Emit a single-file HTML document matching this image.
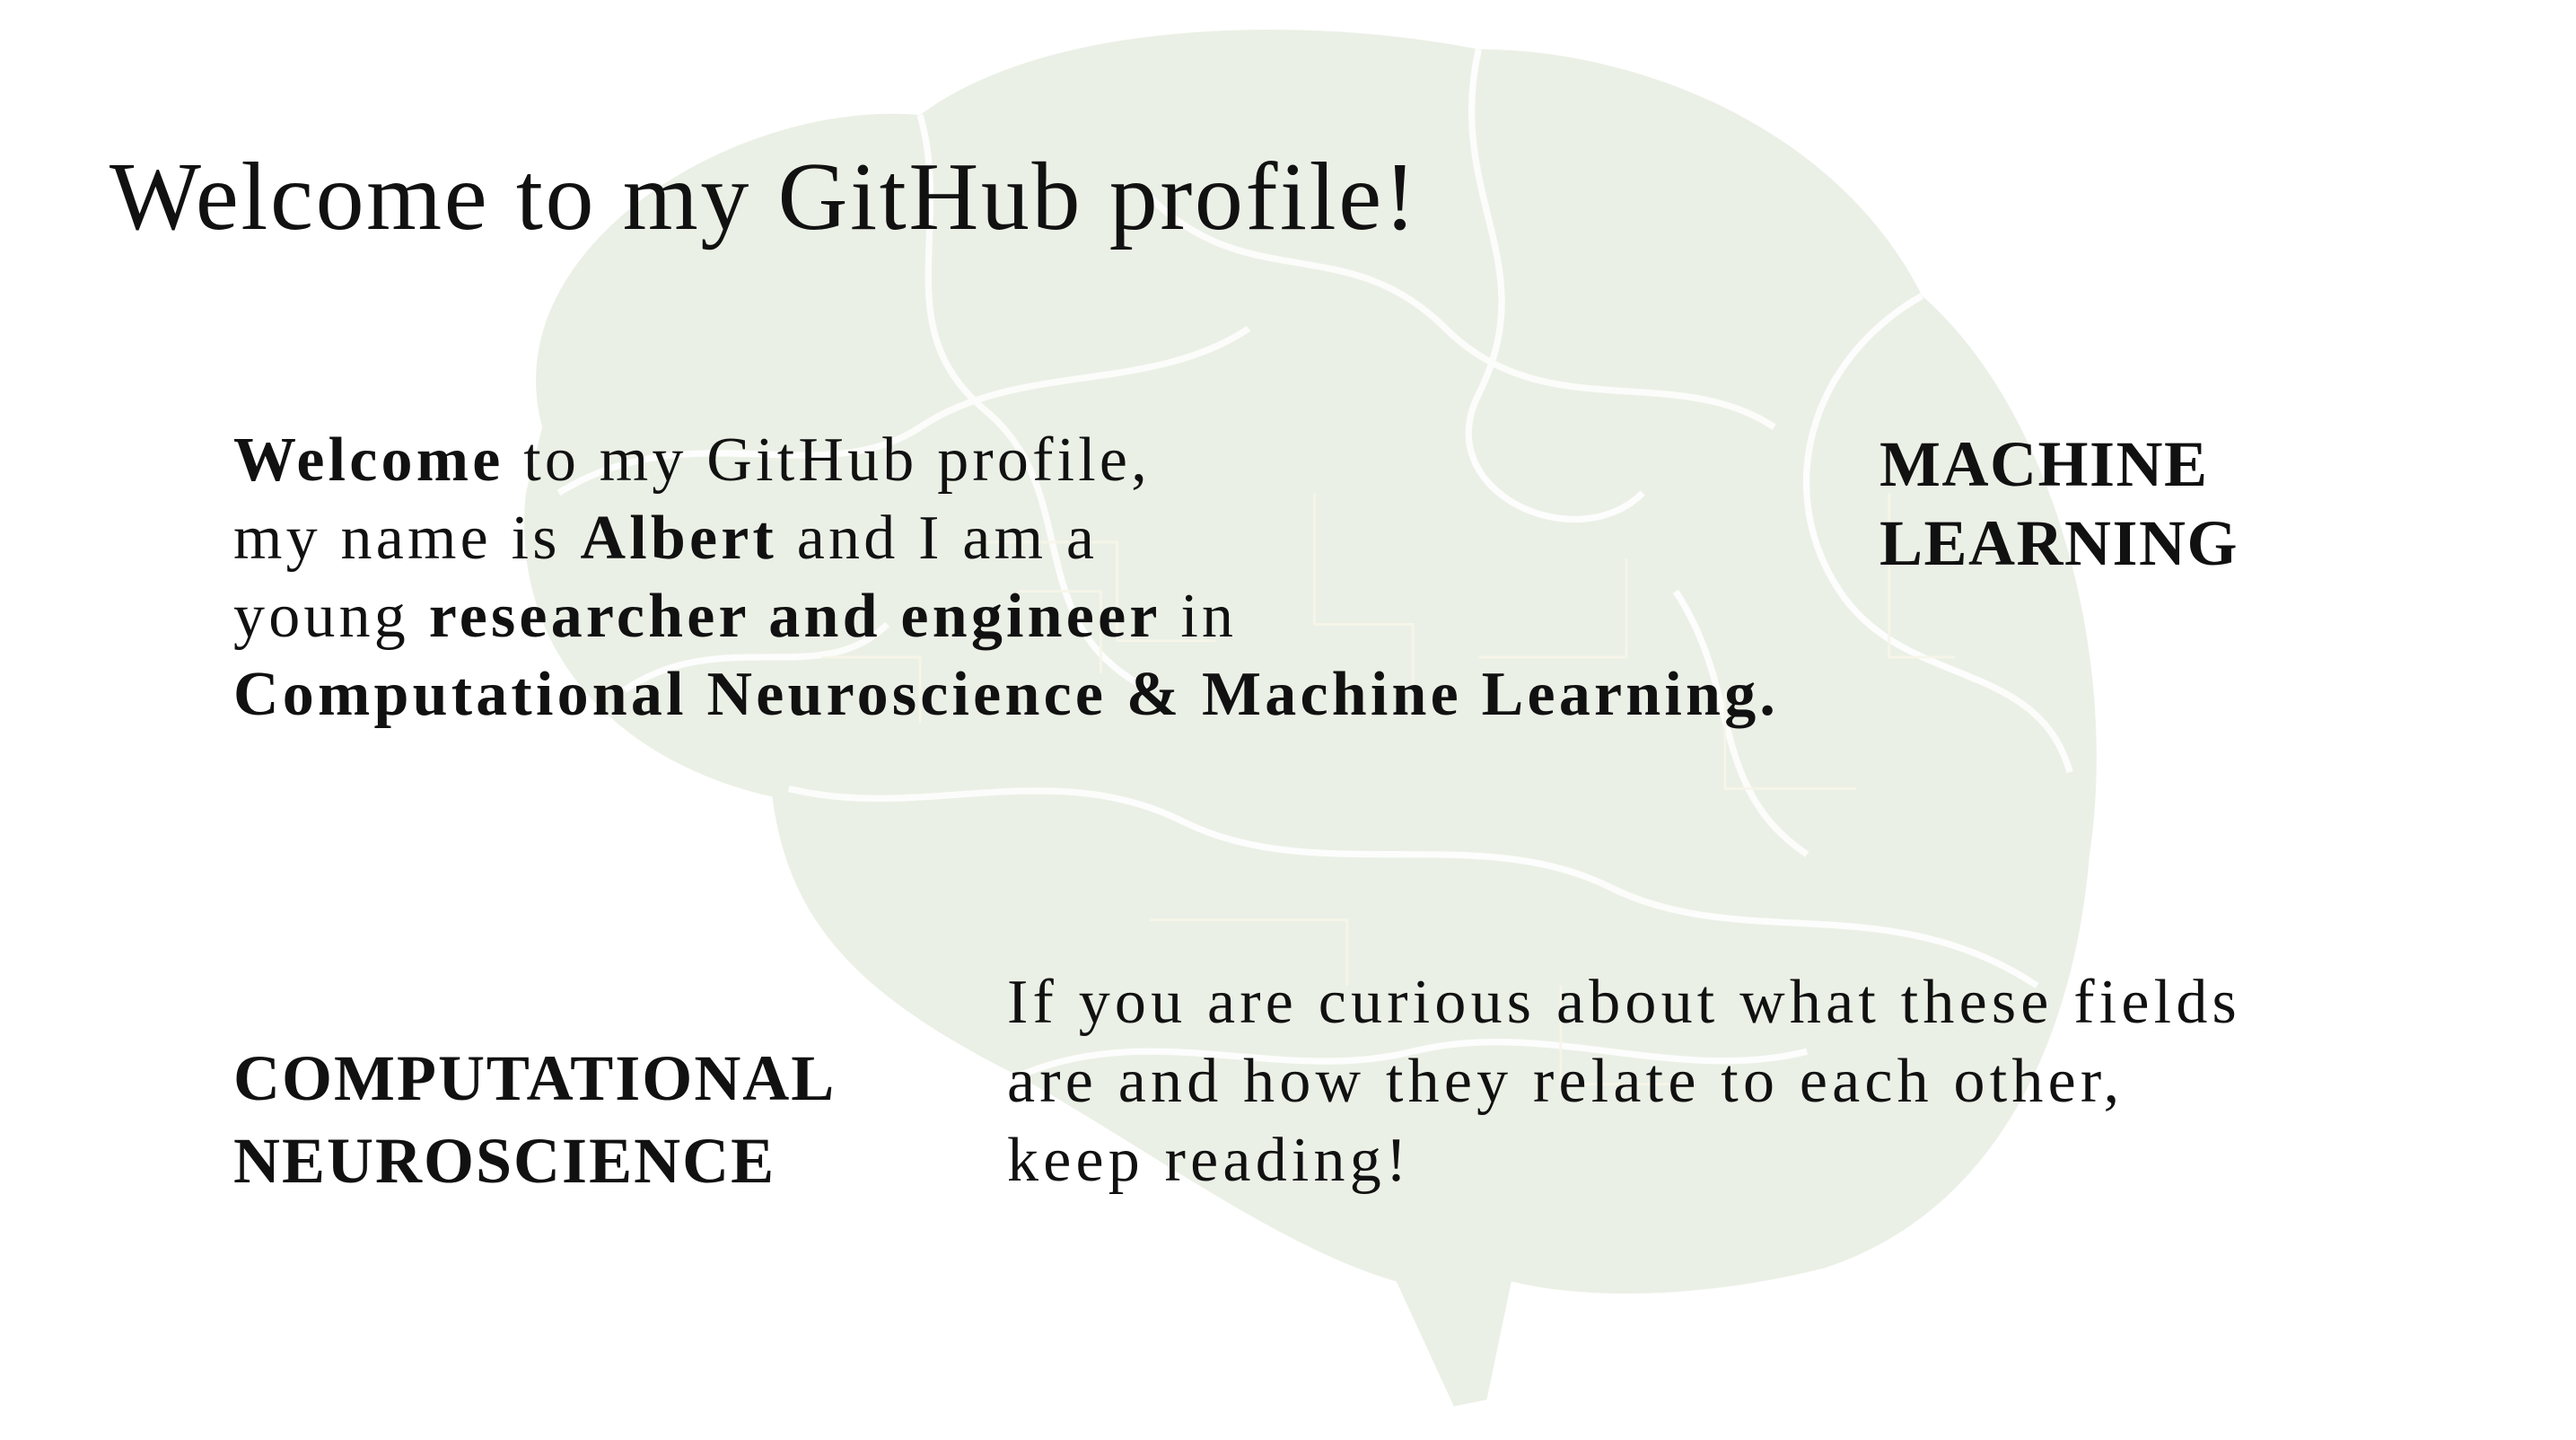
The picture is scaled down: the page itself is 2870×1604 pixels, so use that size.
<!DOCTYPE html>
<html><head><meta charset="utf-8"><style>
html,body{margin:0;padding:0;background:#fff;}
body{width:2870px;height:1604px;position:relative;overflow:hidden;font-family:"Liberation Serif",serif;color:#111;}
.t{position:absolute;white-space:nowrap;line-height:1;}
b{font-weight:700;}
</style></head><body>
<svg style="position:absolute;left:0;top:0" width="2870" height="1604" viewBox="0 0 1568 876.5">
<path d="M330 260 C300 150 450 60 560 70 C640 10 800 10 900 30 C1000 30 1120 80 1170 180 C1250 250 1290 400 1272 520 C1262 640 1210 740 1110 772 C1030 792 960 790 920 780 L905 852 L885 856 L850 780 C780 760 700 700 620 655 C520 605 480 560 470 485 C380 465 310 400 320 300 Z" fill="#ebf0e6"/>
<g fill="none" stroke="#fff" stroke-width="4" opacity="0.85">
<path d="M340 300 C420 250 500 300 560 260 C620 220 700 240 760 200"/>
<path d="M560 70 C580 140 540 200 600 250 C660 300 620 380 700 420"/>
<path d="M900 30 C880 120 940 160 900 240 C870 300 960 340 1000 300"/>
<path d="M1170 180 C1100 220 1080 300 1120 360 C1160 420 1240 400 1260 470"/>
<path d="M480 480 C560 500 640 460 720 500 C800 540 900 500 980 540 C1060 580 1150 540 1240 600"/>
<path d="M620 655 C700 620 780 660 860 640 C940 620 1020 660 1100 640"/>
<path d="M700 120 C760 180 820 140 880 200 C940 260 1020 220 1080 260"/>
<path d="M380 420 C440 380 500 420 540 380"/>
<path d="M1020 360 C1060 420 1040 480 1100 520"/>
</g>
<g fill="none" stroke="#f7f5e8" stroke-width="1.5" opacity="0.9">
<path d="M600 330 h80 v60 h60 M620 360 h50 v50 M800 300 v80 h60 v40 M900 400 h90 v-60 M1050 420 v60 h80 M700 560 h120 v40 M950 600 v60 h70 M1150 300 v100 h40 M500 400 h60 v40"/>
</g>
</svg>
<div class="t" style="left:122px;top:166px;font-size:108px;letter-spacing:2.6px;">Welcome to my GitHub profile!</div>
<div class="t" style="left:260px;top:469px;font-size:70px;line-height:87px;letter-spacing:4.2px;"><b>Welcome</b> to my GitHub profile,<br>my name is <b>Albert</b> and I am a<br>young <b>researcher and engineer</b> in<br><b>Computational Neuroscience &amp; Machine Learning.</b></div>
<div class="t" style="left:2094px;top:473px;font-size:72px;line-height:88px;font-weight:700;letter-spacing:1.5px;">MACHINE<br>LEARNING</div>
<div class="t" style="left:260px;top:1155px;font-size:72px;line-height:92px;font-weight:700;letter-spacing:2px;">COMPUTATIONAL<br>NEUROSCIENCE</div>
<div class="t" style="left:1122px;top:1073px;font-size:70px;line-height:88px;letter-spacing:5.2px;">If you are curious about what these fields<br>are and how they relate to each other,<br>keep reading!</div>
</body></html>
